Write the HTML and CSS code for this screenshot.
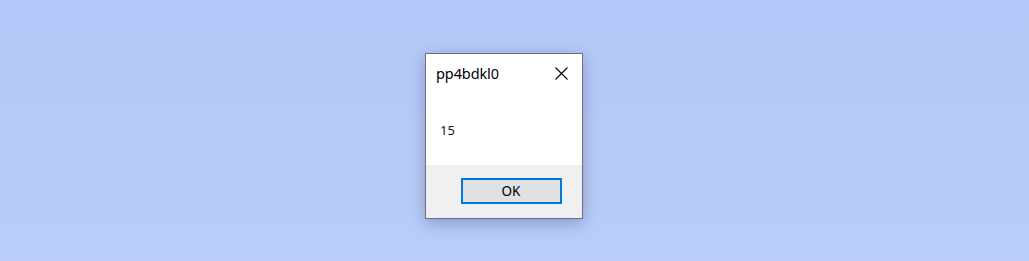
FILE: index.html
```html
<!DOCTYPE html>
<html>
<head>
<meta charset="utf-8">
<link rel="stylesheet" href="styles.css">
</head>
<body>
<div class="stage">
  <div class="dialog">
    <div class="titlebar">
      <span class="title">pp4bdkl0</span>
      <span class="close">
        <svg width="13" height="13" viewBox="0 0 13 13"><path d="M0.5 0.5 L12.5 12.5 M12.5 0.5 L0.5 12.5" stroke="#000" stroke-width="1.1" fill="none"/></svg>
      </span>
    </div>
    <div class="message">15</div>
    <div class="footer">
      <button class="ok">OK</button>
    </div>
  </div>
</div>
</body>
</html>
```
FILE: styles.css
```css
html, body {
  margin: 0;
  height: 100%;
}
body {
  background: linear-gradient(to bottom, #b3c8f8, #b9cdf8);
  font-family: "Noto Sans", "DejaVu Sans", sans-serif;
}
.stage {
  padding: 53px 0 0 425px;
  display: flex;
  align-items: flex-start;
}
.dialog {
  width: 156px;
  border: 1px solid #6e7079;
  background: #fff;
  box-shadow: 0 4px 14px rgba(40, 60, 110, 0.35);
  display: flex;
  flex-direction: column;
}
.titlebar {
  height: 38px;
  display: flex;
  align-items: center;
  justify-content: space-between;
  padding: 0 14px 0 10px;
}
.title {
  font-size: 14.5px;
  color: #000;
  letter-spacing: -0.1px;
}
.close {
  display: flex;
  padding-top: 1px;
}
.message {
  height: 73px;
  display: flex;
  align-items: center;
  padding: 3px 0 0 14px;
  box-sizing: border-box;
  font-size: 13px;
  color: #1a1a1a;
}
.footer {
  background: #f0f0f0;
  height: 53px;
  display: flex;
  justify-content: center;
  align-items: flex-start;
  padding-top: 13px;
  box-sizing: border-box;
  padding-left: 14px;
}
.ok {
  width: 101px;
  height: 26px;
  border: 2px solid #0078d7;
  background: #e1e1e1;
  font-family: "Noto Sans", "DejaVu Sans", sans-serif;
  font-size: 13.5px;
  color: #000;
  padding: 0;
  margin: 0;
}
```
